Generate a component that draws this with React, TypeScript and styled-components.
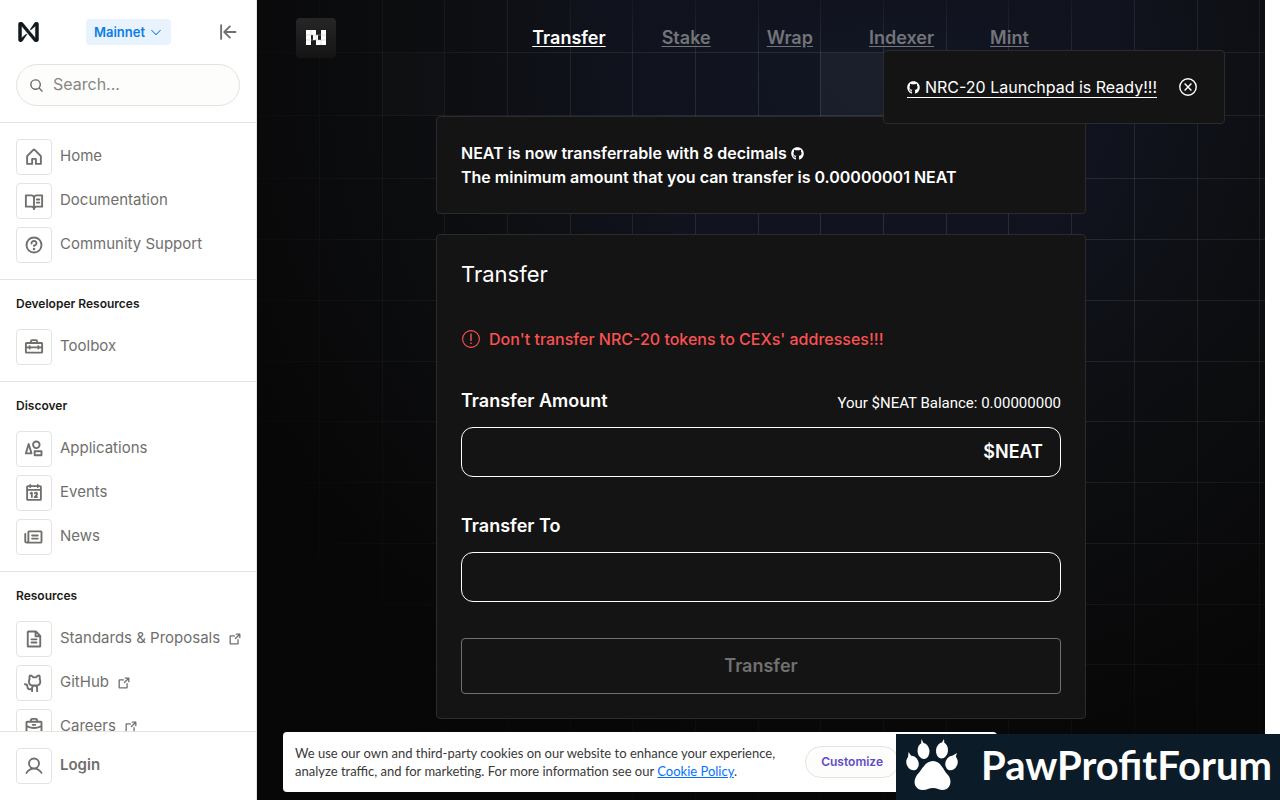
import React from 'react';
import styled, { createGlobalStyle } from 'styled-components';
import {
  PiHouseBold, PiBookOpenTextBold, PiQuestionBold, PiToolboxBold, PiShapesBold, PiCalendarBold,
  PiNewspaperBold, PiFileTextBold, PiGithubLogoBold, PiBriefcaseBold, PiUserBold,
  PiArrowSquareOutBold, PiArrowLineLeftBold, PiMagnifyingGlassBold, PiCaretDown,
} from 'react-icons/pi';
import { FaGithub } from 'react-icons/fa';

const Global = createGlobalStyle`
  *, *::before, *::after { box-sizing: border-box; }
  body { margin: 0; background: #fff; font-family: Inter, "Liberation Sans", sans-serif; }
  a { color: inherit; }
  button, input { font: inherit; }
  h1, h2, p, ul { margin: 0; padding: 0; }
  svg { flex: none; }
`;

const Page = styled.div`
  display: flex;
  height: 100vh;
  overflow: hidden;
  padding-right: 15px;
`;

const Sidebar = styled.aside`
  flex: none;
  width: 257px;
  display: flex;
  flex-direction: column;
  border-right: 1px solid #e3e3e0;
  color: #706f6c;
`;

const SidebarTop = styled.div`
  padding: 16px;
  border-bottom: 1px solid #e3e3e0;
`;

const BrandRow = styled.div`
  display: flex;
  align-items: center;
  justify-content: space-between;
  height: 32px;
  padding: 0 2px;
  margin-bottom: 16px;
`;

const NetworkButton = styled.button`
  display: flex;
  align-items: center;
  gap: 4px;
  height: 26px;
  padding: 0 8px;
  border: 0;
  border-radius: 4px;
  background: #e8f3fe;
  color: #0c7ce6;
  font-size: 13px;
  font-weight: 600;
`;

const IconButton = styled.button`
  display: flex;
  padding: 0;
  border: 0;
  background: none;
  color: inherit;
`;

const SearchBox = styled.label`
  display: flex;
  align-items: center;
  gap: 9px;
  height: 42px;
  padding: 0 12px;
  border: 1px solid #e3e3e0;
  border-radius: 21px;
  background: #fdfdfc;
  input {
    flex: 1;
    min-width: 0;
    padding: 0 0 2px;
    border: 0;
    outline: 0;
    background: none;
    font-size: 16px;
    color: #706f6c;
  }
  input::placeholder { color: #868682; opacity: 1; }
`;

const SidebarScroll = styled.nav`
  flex: 1;
  min-height: 0;
  overflow: hidden;
`;

const Section = styled.section`
  padding: 16px;
  border-bottom: 1px solid #e3e3e0;
`;

const SectionTitle = styled.h2`
  margin-bottom: 18px;
  font-size: 12px;
  line-height: 15px;
  font-weight: 600;
  color: #1b1b18;
`;

const LinkList = styled.div`
  display: flex;
  flex-direction: column;
  gap: 8px;
`;

const NavItem = styled.a<{ $strong?: boolean }>`
  display: flex;
  align-items: center;
  gap: 8px;
  color: #706f6c;
  font-size: 15px;
  font-weight: ${(p) => (p.$strong ? 600 : 400)};
  text-decoration: none;
  white-space: nowrap;
`;

const IconTile = styled.span`
  flex: none;
  display: flex;
  align-items: center;
  justify-content: center;
  width: 36px;
  height: 36px;
  border: 1px solid #e3e3e0;
  border-radius: 4px;
`;

const ItemLabel = styled.span`
  padding-bottom: 4px;
`;

const SidebarFooter = styled.div`
  padding: 16px;
  border-top: 1px solid #e3e3e0;
`;

const Main = styled.main`
  position: relative;
  flex: 1;
  min-width: 0;
  background: #070707;
  color: #fff;
  overflow: hidden;
`;

const Backdrop = styled.svg`
  position: absolute;
  inset: 0;
  width: 100%;
  height: 100%;
`;

const Content = styled.div`
  position: relative;
  display: flex;
  flex-direction: column;
  align-items: center;
`;

const Header = styled.header`
  display: flex;
  align-items: center;
  align-self: stretch;
  height: 76px;
  padding: 0 40px 0 39px;
`;

const AppLogo = styled.a`
  display: flex;
  align-items: center;
  justify-content: center;
  width: 40px;
  height: 40px;
  border-radius: 4px;
  background: linear-gradient(#262626, #141414);
`;

const Tabs = styled.nav`
  flex: 1;
  display: flex;
  justify-content: center;
  gap: 56px;
  padding-bottom: 2px;
`;

const Tab = styled.a<{ $active?: boolean }>`
  font-size: 18px;
  font-weight: 600;
  color: ${(p) => (p.$active ? '#fff' : '#73747a')};
  text-underline-offset: 2px;
`;

const Stack = styled.div`
  display: flex;
  flex-direction: column;
  gap: 20px;
  width: 100%;
  max-width: 650px;
  margin-top: 40px;
`;

const Card = styled.section`
  padding: 24px;
  border: 1px solid #2b2b2b;
  border-radius: 4px;
  background: #141414;
`;

const Notice = styled.p`
  font-size: 16px;
  line-height: 24px;
  font-weight: 600;
  svg { vertical-align: -1px; }
`;

const CardTitle = styled.h1`
  font-size: 22px;
  line-height: 30px;
  font-weight: 400;
`;

const Warning = styled.p`
  display: flex;
  align-items: center;
  gap: 9px;
  margin: 38px 0 37px;
  padding-left: 1px;
  font-size: 16px;
  line-height: 24px;
  font-weight: 500;
  color: #fa5252;
`;

const FieldHead = styled.div`
  display: flex;
  align-items: flex-start;
  justify-content: space-between;
  margin-bottom: 13px;
`;

const FieldLabel = styled.label`
  font-size: 18px;
  line-height: 26px;
  font-weight: 600;
`;

const Balance = styled.span`
  padding-top: 4px;
  font-family: Roboto, "Liberation Sans", sans-serif;
  font-size: 15px;
  line-height: 22px;
`;

const FieldBox = styled.div`
  display: flex;
  align-items: center;
  height: 50px;
  margin-bottom: 36px;
  padding: 0 17px;
  border: 1px solid #fff;
  border-radius: 12px;
  font-size: 18px;
  font-weight: 600;
  input {
    flex: 1;
    min-width: 0;
    border: 0;
    outline: 0;
    background: none;
    color: #fff;
  }
`;

const Unit = styled.span`
  padding-bottom: 2px;
`;

const SubmitButton = styled.button`
  display: block;
  width: 100%;
  height: 56px;
  padding: 0 0 2px;
  border: 1px solid #707070;
  border-radius: 4px;
  background: none;
  color: #707070;
  font-size: 18px;
  font-weight: 600;
`;

const Toast = styled.div`
  position: absolute;
  top: 50px;
  right: 40px;
  display: flex;
  align-items: center;
  gap: 22px;
  height: 74px;
  padding: 0 27px 0 23px;
  border: 1px solid #2b2b2b;
  border-radius: 4px;
  background: #141414;
  font-size: 16px;
`;

const ToastLink = styled.a`
  border-bottom: 1px solid #fff;
  line-height: 20px;
  text-decoration: none;
  svg { vertical-align: -1px; }
`;

const CookieBar = styled.div`
  position: absolute;
  left: 26px;
  bottom: 8px;
  display: flex;
  align-items: center;
  justify-content: space-between;
  width: 714px;
  height: 60px;
  padding: 0 98px 0 12px;
  border-radius: 4px;
  background: #fff;
  color: #393939;
  font-family: Lato, "Liberation Sans", sans-serif;
  font-size: 13px;
  line-height: 18px;
`;

const CookieLink = styled.a`
  color: #0072ff;
`;

const PillButton = styled.button`
  height: 32px;
  padding: 0 15px;
  border: 1px solid #e3e3e0;
  border-radius: 16px;
  background: #fdfdfc;
  color: #604cc8;
  font-family: Inter, "Liberation Sans", sans-serif;
  font-size: 12px;
  font-weight: 600;
`;

const Watermark = styled.div`
  position: fixed;
  right: 0;
  bottom: 0;
  display: flex;
  align-items: center;
  gap: 23px;
  width: 384px;
  height: 66px;
  padding: 0 0 4px 10px;
  background: #0b1b28;
  color: #fff;
  font-family: Lato, "Liberation Sans", sans-serif;
  font-size: 40px;
  font-weight: 700;
  white-space: nowrap;
`;

const columns = [-1, 62, 125, 187, 250, 313, 375, 438, 501, 563, 626, 689, 751, 814, 877, 940, 1002];
const rows = [52, 115, 178, 239, 300, 361, 421, 482, 543, 604, 664];

const sections = [
  { title: '', items: [
    { label: 'Home', Icon: PiHouseBold },
    { label: 'Documentation', Icon: PiBookOpenTextBold },
    { label: 'Community Support', Icon: PiQuestionBold },
  ] },
  { title: 'Developer Resources', items: [{ label: 'Toolbox', Icon: PiToolboxBold }] },
  { title: 'Discover', items: [
    { label: 'Applications', Icon: PiShapesBold },
    { label: 'Events', Icon: PiCalendarBold },
    { label: 'News', Icon: PiNewspaperBold },
  ] },
  { title: 'Resources', items: [
    { label: 'Standards & Proposals', Icon: PiFileTextBold, external: true },
    { label: 'GitHub', Icon: PiGithubLogoBold, external: true },
    { label: 'Careers', Icon: PiBriefcaseBold, external: true },
  ] },
] as { title: string; items: { label: string; Icon: React.ComponentType<{ size?: number }>; external?: boolean }[] }[];

function NearMark() {
  return (
    <svg width="21" height="20" viewBox="0 0 90 90" fill="#11181c" stroke="#11181c" strokeWidth="2">
      <path d="M72.2,4.6L53.4,32.5c-1.3,1.9,1.2,4.2,3,2.6L74.9,19c0.5-0.4,1.2-0.1,1.2,0.6v50.3c0,0.7-0.9,1-1.3,0.5l-56-67C17,1.2,14.4,0,11.5,0h-2C4.3,0,0,4.3,0,9.6v70.8C0,85.7,4.3,90,9.6,90c3.3,0,6.4-1.7,8.2-4.6l18.8-27.9c1.3-1.9-1.2-4.2-3-2.6l-18.5,16c-0.5,0.4-1.2,0.1-1.2-0.6V20.1c0-0.7,0.9-1,1.3-0.5l56,67c1.8,2.2,4.5,3.4,7.3,3.4h2c5.3,0,9.6-4.3,9.6-9.6V9.6c0-5.3-4.3-9.6-9.6-9.6C77.1,0,74,1.7,72.2,4.6z" />
    </svg>
  );
}

function NeatMark() {
  return (
    <svg width="20" height="16" viewBox="0 0 20 16">
      <path d="M0 0h10v5h2v5h3V0h5v15H10v-5H7V5H5v10H0z" fill="#fff" />
      <path d="M0 5h20M0 10h20M5 0v5M10 5v5M15 10v5" stroke="#bbb" strokeWidth="0.5" fill="none" />
    </svg>
  );
}

function WarningIcon() {
  return (
    <svg width="18" height="18" viewBox="0 0 18 18" fill="none" stroke="currentColor">
      <circle cx="9" cy="9" r="8.4" strokeWidth="1.1" />
      <path d="M9 3.500v7.500M9 12.600v1.500" strokeWidth="1.4" />
    </svg>
  );
}

function CloseIcon() {
  return (
    <svg width="18" height="18" viewBox="0 0 18 18" fill="none" stroke="currentColor" strokeWidth="1.4">
      <circle cx="9" cy="9" r="8.2" />
      <path d="M5.600 5.600l6.800 6.800M12.400 5.600l-6.800 6.800" />
    </svg>
  );
}

function Paw() {
  return (
    <svg width="52" height="52" viewBox="0 0 52 52" fill="#fff">
      <ellipse cx="17.500" cy="12" rx="6" ry="8" transform="rotate(-6 17.500 12)" />
      <ellipse cx="36" cy="11.500" rx="6" ry="8" transform="rotate(6 36 11.500)" />
      <ellipse cx="6.500" cy="24" rx="6" ry="7.500" transform="rotate(-22 6.500 24)" />
      <ellipse cx="45.500" cy="24" rx="6" ry="7.500" transform="rotate(22 45.500 24)" />
      <path d="M15 6l.5-6 2.500 5zM35 5l3-5 .5 6zM2 19l.5-6 3.500 5zM46 17l5-3-2 6z" />
      <path d="M27 22c8 0 10 9 15 14 5 6 2 15-5 15-4 0-6-2-10-2s-6 2-10 2c-8 0-11-8-6-15 5-5 8-14 16-14z" />
    </svg>
  );
}

function GridBackdrop() {
  return (
    <Backdrop viewBox="0 0 1008 800" preserveAspectRatio="none" aria-hidden="true">
      <defs>
        <radialGradient id="glow" gradientUnits="userSpaceOnUse" cx="620" cy="60" r="720">
          <stop offset="0" stopColor="#121624" />
          <stop offset="0.35" stopColor="#10131d" />
          <stop offset="0.6" stopColor="#0d0e11" />
          <stop offset="1" stopColor="#070707" />
        </radialGradient>
        <radialGradient id="fade" gradientUnits="userSpaceOnUse" cx="640" cy="180" r="740">
          <stop offset="0" stopColor="#fff" stopOpacity="0.12" />
          <stop offset="0.5" stopColor="#fff" stopOpacity="0.07" />
          <stop offset="0.8" stopColor="#fff" stopOpacity="0.02" />
          <stop offset="1" stopColor="#fff" stopOpacity="0" />
        </radialGradient>
        <linearGradient id="veil" x1="0" y1="0" x2="0" y2="1">
          <stop offset="0" stopColor="#10131d" stopOpacity="0.7" />
          <stop offset="1" stopColor="#10131d" stopOpacity="0" />
        </linearGradient>
      </defs>
      <rect width="1008" height="800" fill="url(#glow)" />
      <rect x="563" y="53" width="63" height="63" fill="#fff" fillOpacity="0.04" />
      <rect x="125" y="53" width="62" height="63" fill="#fff" fillOpacity="0.015" />
      {columns.map((x) => <rect key={x} x={x} y="0" width="1" height="800" fill="url(#fade)" />)}
      {rows.map((y) => <rect key={y} x="0" y={y} width="1008" height="1" fill="url(#fade)" />)}
      <rect x="313" width="563" height="52" fill="url(#veil)" />
    </Backdrop>
  );
}

export default function App() {
  return (
    <>
      <Global />
      <Page>
        <Sidebar>
          <SidebarTop>
            <BrandRow>
              <NearMark />
              <NetworkButton>Mainnet <PiCaretDown size={14} /></NetworkButton>
              <IconButton aria-label="Collapse sidebar"><PiArrowLineLeftBold size={20} /></IconButton>
            </BrandRow>
            <SearchBox>
              <PiMagnifyingGlassBold size={15} />
              <input type="text" placeholder="Search..." aria-label="Search" />
            </SearchBox>
          </SidebarTop>
          <SidebarScroll>
            {sections.map(({ title, items }) => (
              <Section key={title}>
                {title && <SectionTitle>{title}</SectionTitle>}
                <LinkList>
                  {items.map(({ label, Icon, external }) => (
                    <NavItem href="#" key={label}>
                      <IconTile><Icon size={20} /></IconTile>
                      <ItemLabel>{label}</ItemLabel>
                      {external && <PiArrowSquareOutBold size={14} />}
                    </NavItem>
                  ))}
                </LinkList>
              </Section>
            ))}
          </SidebarScroll>
          <SidebarFooter>
            <NavItem href="#" $strong>
              <IconTile><PiUserBold size={20} /></IconTile>
              <ItemLabel>Login</ItemLabel>
            </NavItem>
          </SidebarFooter>
        </Sidebar>

        <Main>
          <GridBackdrop />
          <Content>
            <Header>
              <AppLogo href="#" aria-label="NEAT"><NeatMark /></AppLogo>
              <Tabs>
                <Tab href="#" $active>Transfer</Tab>
                <Tab href="#">Stake</Tab>
                <Tab href="#">Wrap</Tab>
                <Tab href="#">Indexer</Tab>
                <Tab href="#">Mint</Tab>
              </Tabs>
            </Header>
            <Stack>
              <Card>
                <Notice>
                  NEAT is now transferrable with 8 decimals <FaGithub size={13} />
                  <br />
                  The minimum amount that you can transfer is 0.00000001 NEAT
                </Notice>
              </Card>
              <Card>
                <CardTitle>Transfer</CardTitle>
                <Warning><WarningIcon />Don't transfer NRC-20 tokens to CEXs' addresses!!!</Warning>
                <FieldHead>
                  <FieldLabel htmlFor="amount">Transfer Amount</FieldLabel>
                  <Balance>Your $NEAT Balance: 0.00000000</Balance>
                </FieldHead>
                <FieldBox><input id="amount" type="text" /><Unit>$NEAT</Unit></FieldBox>
                <FieldHead>
                  <FieldLabel htmlFor="receiver">Transfer To</FieldLabel>
                </FieldHead>
                <FieldBox><input id="receiver" type="text" /></FieldBox>
                <SubmitButton disabled>Transfer</SubmitButton>
              </Card>
            </Stack>
          </Content>
          <Toast>
            <ToastLink href="#"><FaGithub size={13} /> NRC-20 Launchpad is Ready!!!</ToastLink>
            <IconButton aria-label="Close"><CloseIcon /></IconButton>
          </Toast>
          <CookieBar>
            <p>
              We use our own and third-party cookies on our website to enhance your experience,<br />
              analyze traffic, and for marketing. For more information see our <CookieLink href="#">Cookie Policy</CookieLink>.
            </p>
            <PillButton>Customize</PillButton>
          </CookieBar>
        </Main>
      </Page>
      <Watermark><Paw />PawProfitForum</Watermark>
    </>
  );
}
